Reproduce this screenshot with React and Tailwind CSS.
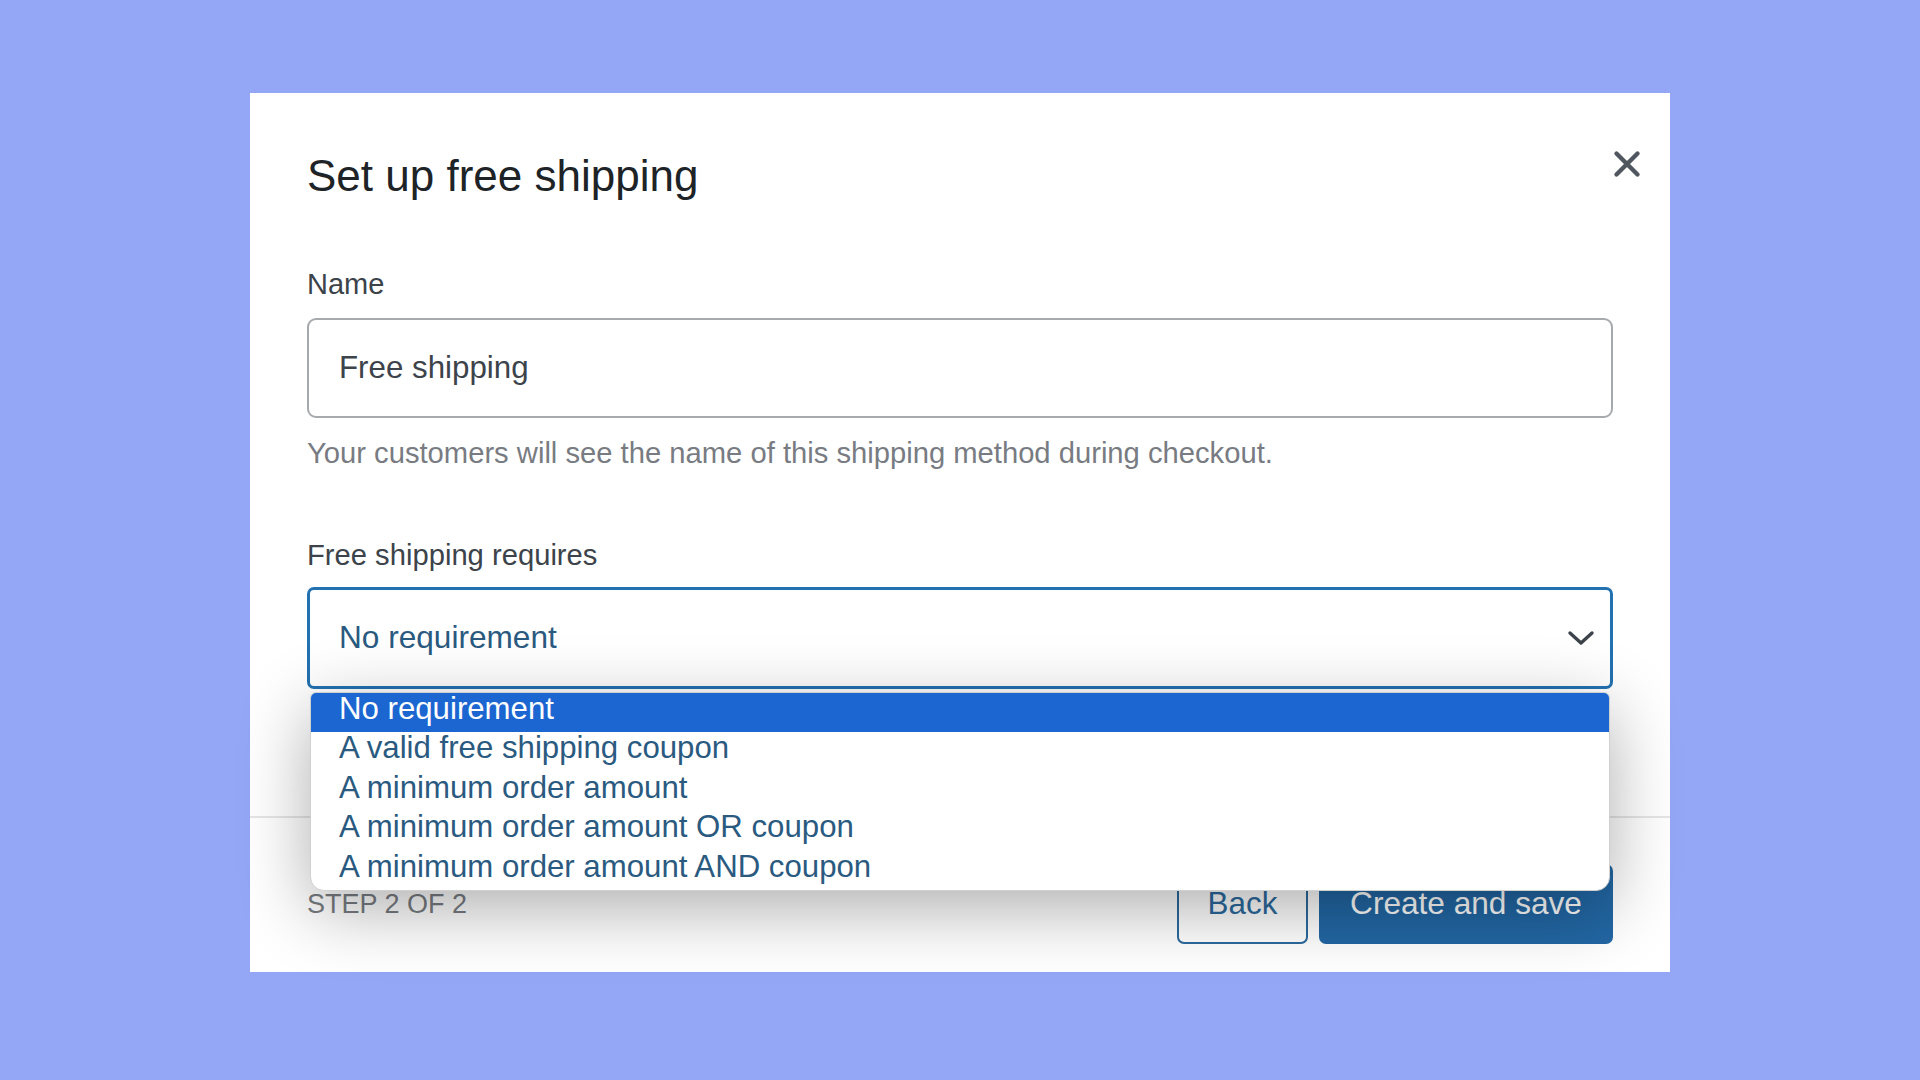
import { useState } from "react";

const options = [
	"No requirement",
	"A valid free shipping coupon",
	"A minimum order amount",
	"A minimum order amount OR coupon",
	"A minimum order amount AND coupon",
];

export default function App() {
	const [name, setName] = useState("Free shipping");
	const [selected] = useState(0);

	return (
		<div
			className="min-h-screen bg-[#94a6f6] pt-[93px]"
			style={{ fontFamily: '"Liberation Sans", Arial, sans-serif' }}
		>
			<div className="relative mx-auto flex h-[879px] w-[1420px] flex-col bg-white">
				{/* close */}
				<button className="absolute right-[25px] top-[53px] flex h-[36px] w-[36px] items-center justify-center text-[#50575e]">
					<svg width="28" height="28" viewBox="0 0 28 28" fill="none">
						<path
							d="M3.5 3.5L24.5 24.5M24.5 3.5L3.5 24.5"
							stroke="currentColor"
							strokeWidth="4.4"
							strokeLinecap="round"
						/>
					</svg>
				</button>

				<div className="flex-1 px-[57px] pt-[57px]">
					<h1 className="text-[44px] leading-[52px] text-[#1d2327]">
						Set up free shipping
					</h1>

					<label className="mt-[65px] block text-[29px] leading-[34px] text-[#3c434a]">
						Name
					</label>
					<input
						value={name}
						onChange={(e) => setName(e.target.value)}
						className="mt-[17px] block h-[100px] w-full rounded-[9px] border-2 border-[#a7aaad] pl-[30px] text-[31.3px] text-[#3c434a] outline-none"
					/>
					<p className="mt-[18px] text-[29.2px] leading-[34px] text-[#787c82]">
						Your customers will see the name of this shipping method during
						checkout.
					</p>

					<label className="mt-[68px] block text-[29.2px] leading-[34px] text-[#3c434a]">
						Free shipping requires
					</label>
					<div className="relative mt-[15px]">
						<div className="flex h-[102px] items-center justify-between rounded-[7px] border-[3px] border-[#2271b1] pl-[29px] pr-[14px] text-[31.6px] text-[#2a5a80]">
							<span>{options[selected]}</span>
							<svg width="30" height="18" viewBox="0 0 30 18" fill="none">
								<path
									d="M4 4L15 14L26 4"
									stroke="#3c434a"
									strokeWidth="3.4"
									strokeLinecap="round"
									strokeLinejoin="round"
								/>
							</svg>
						</div>

						{/* open list */}
						<ul className="absolute left-[3px] right-[3px] top-[105px] z-10 overflow-hidden rounded-t-[6px] rounded-b-[14px] border border-[#d0d0d0] bg-white shadow-[0_18px_70px_rgba(0,0,0,0.32)]">
							{options.map((opt, i) => (
								<li
									key={opt}
									className={`h-[39.4px] pl-[28px] pb-[7px] text-[31.2px] leading-[32px] ${
										i === selected
											? "bg-[#1b66d1] text-white"
											: "text-[#2a5a80]"
									}`}
								>
									{opt}
								</li>
							))}
						</ul>
					</div>
				</div>

				<div className="flex items-center justify-between border-t-2 border-[#e6e6e6] px-[57px] pb-[28px] pt-[46px]">
					<span className="text-[27px] uppercase text-[#787c82]">
						Step 2 of 2
					</span>
					<div className="flex gap-[11px]">
						<button className="h-[80px] w-[131px] rounded-[7px] border-2 border-[#2c6a9e] text-[31.4px] text-[#2c6a9e]">
							Back
						</button>
						<button className="h-[80px] w-[294px] rounded-[7px] bg-[#2267a4] text-[31.6px] text-white">
							Create and save
						</button>
					</div>
				</div>
			</div>
		</div>
	);
}
